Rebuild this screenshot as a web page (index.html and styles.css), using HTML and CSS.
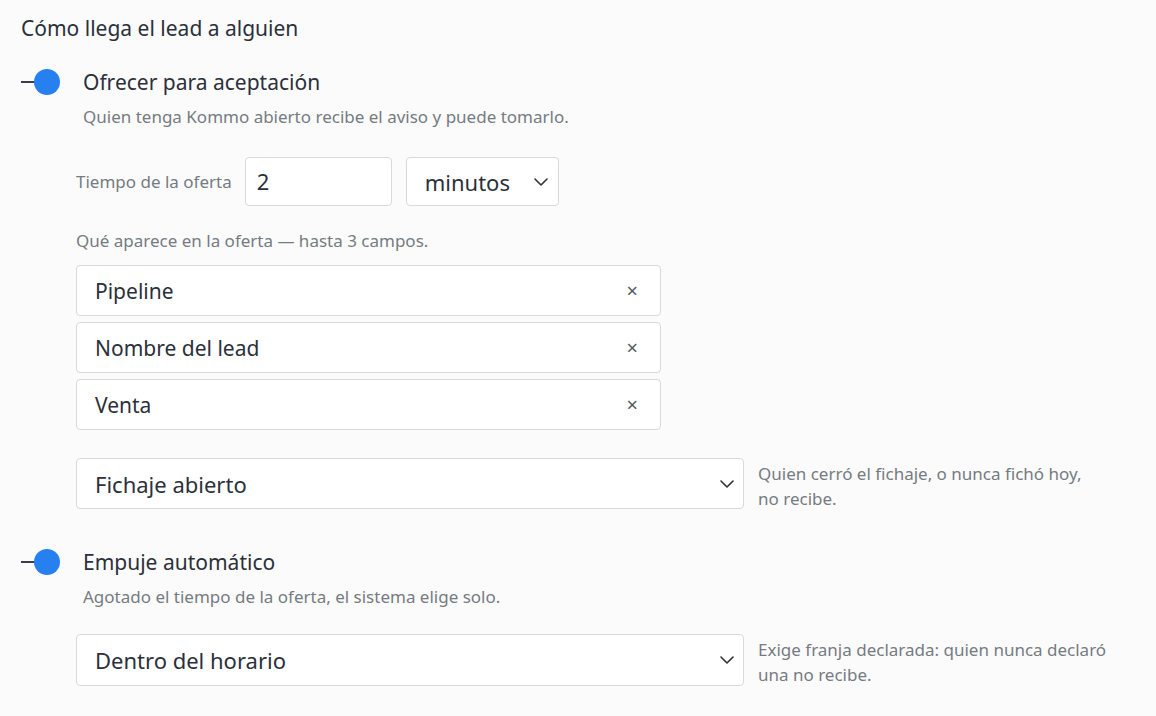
FILE: index.html
```html
<!DOCTYPE html>
<html lang="es">
<head>
  <meta charset="UTF-8">
  <title>Distribución de leads</title>
  <link rel="stylesheet" href="styles.css">
</head>
<body>
  <div class="page">
    <h2 class="section-title">Cómo llega el lead a alguien</h2>

    <!-- Ofrecer para aceptación -->
    <div class="option">
      <span class="toggle"><span class="knob"></span></span>
      <div class="option-title">Ofrecer para aceptación</div>
    </div>
    <p class="option-desc">Quien tenga Kommo abierto recibe el aviso y puede tomarlo.</p>

    <div class="option-body">
      <div class="offer-row">
        <label class="offer-label">Tiempo de la oferta</label>
        <div class="box input-time">2</div>
        <div class="box select-unit">
          <span>minutos</span>
          <svg class="chevron" width="14" height="8" viewBox="0 0 14 8"><polyline points="1,1 7,7 13,1" fill="none" stroke="#333" stroke-width="1.6" stroke-linecap="round" stroke-linejoin="round"/></svg>
        </div>
      </div>

      <p class="hint">Qué aparece en la oferta — hasta 3 campos.</p>

      <div class="fields">
        <div class="box field"><span>Pipeline</span><span class="remove">×</span></div>
        <div class="box field"><span>Nombre del lead</span><span class="remove">×</span></div>
        <div class="box field"><span>Venta</span><span class="remove">×</span></div>
      </div>

      <div class="select-row first">
        <div class="box select-wide">
          <span>Fichaje abierto</span>
          <svg class="chevron" width="14" height="8" viewBox="0 0 14 8"><polyline points="1,1 7,7 13,1" fill="none" stroke="#333" stroke-width="1.6" stroke-linecap="round" stroke-linejoin="round"/></svg>
        </div>
        <p class="note">Quien cerró el fichaje, o nunca fichó hoy,<br>no recibe.</p>
      </div>
    </div>

    <!-- Empuje automático -->
    <div class="option second">
      <span class="toggle"><span class="knob"></span></span>
      <div class="option-title">Empuje automático</div>
    </div>
    <p class="option-desc">Agotado el tiempo de la oferta, el sistema elige solo.</p>

    <div class="option-body">
      <div class="select-row last">
        <div class="box select-wide">
          <span>Dentro del horario</span>
          <svg class="chevron" width="14" height="8" viewBox="0 0 14 8"><polyline points="1,1 7,7 13,1" fill="none" stroke="#333" stroke-width="1.6" stroke-linecap="round" stroke-linejoin="round"/></svg>
        </div>
        <p class="note">Exige franja declarada: quien nunca declaró<br>una no recibe.</p>
      </div>
    </div>
  </div>
</body>
</html>
```

FILE: styles.css
```css
body {
  margin: 0;
  background-color: #fbfbfb;
  font-family: "Noto Sans", "Open Sans", sans-serif;
  color: #2b303a;
}
.page {
  padding: 14px 21px 0 21px;
}
.section-title {
  margin: 0;
  font-size: 21px;
  line-height: 28px;
  font-weight: 400;
}
/* cabecera de cada opción con su interruptor */
.option {
  display: flex;
  align-items: center;
  margin-top: 26px;
  height: 28px;
}
.option.second {
  margin-top: 37px;
}
.toggle {
  position: relative;
  display: inline-block;
  width: 42px;
  height: 26px;
  margin-right: 20px;
}
.toggle::before {
  content: "";
  position: absolute;
  left: 0;
  top: 12px;
  width: 18px;
  height: 2px;
  background: #3a3f48;
}
.toggle .knob {
  position: absolute;
  left: 13px;
  top: 0;
  width: 26px;
  height: 26px;
  border-radius: 50%;
  background: #2680f0;
}
.option-title {
  font-size: 21px;
  line-height: 28px;
}
.option-desc {
  margin: 9px 0 0 62px;
  font-size: 17px;
  line-height: 24px;
  color: #767b82;
}
.option-body {
  margin-left: 55px;
}
.box {
  box-sizing: border-box;
  background: #fff;
  border: 1px solid #d8d9db;
  border-radius: 4px;
}
.offer-row {
  display: flex;
  align-items: center;
  margin-top: 28px;
}
.offer-label {
  font-size: 17px;
  color: #767b82;
  margin-right: 13px;
}
.input-time {
  width: 147px;
  height: 49px;
  padding: 0 11px;
  font-size: 22px;
  line-height: 47px;
  margin-right: 14px;
}
.select-unit {
  width: 153px;
  height: 49px;
  padding: 0 10px 0 18px;
  font-size: 22px;
  display: flex;
  align-items: center;
  justify-content: space-between;
}
.hint {
  margin: 23px 0 0 0;
  font-size: 17px;
  line-height: 24px;
  color: #767b82;
}
.fields {
  display: flex;
  flex-direction: column;
  gap: 6px;
  margin-top: 12px;
  width: 585px;
}
.field {
  height: 51px;
  padding: 0 22px 0 18px;
  display: flex;
  align-items: center;
  justify-content: space-between;
  font-size: 21px;
}
.remove {
  font-size: 20px;
  color: #555a62;
}
.select-row {
  display: flex;
  align-items: flex-start;
  margin-top: 28px;
}
.select-row.last {
  margin-top: 25px;
}
.select-wide {
  width: 668px;
  height: 51px;
  flex-shrink: 0;
  padding: 0 9px 0 18px;
  display: flex;
  align-items: center;
  justify-content: space-between;
  font-size: 22px;
}
.select-row.last .select-wide {
  height: 52px;
}
.note {
  margin: 3px 0 0 14px;
  font-size: 17px;
  line-height: 25px;
  color: #767b82;
}
```
